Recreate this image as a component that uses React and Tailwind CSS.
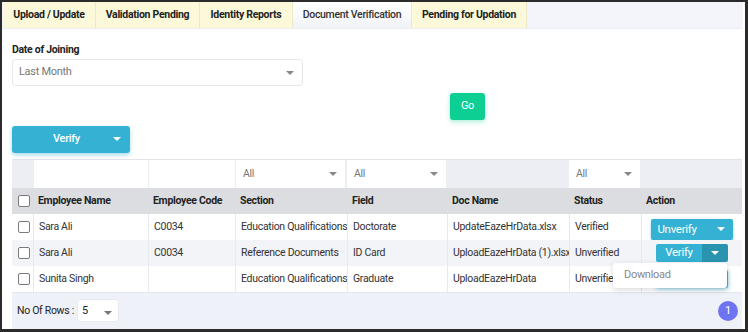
import React from 'react';

// tabs across the top
const tabs = [
    { label: 'Upload / Update', w: 'w-[93px]' },
    { label: 'Validation Pending', w: 'w-[104px]' },
    { label: 'Identity Reports', w: 'w-[93px]' },
    { label: 'Document Verification', w: 'w-[119px]', active: true },
    { label: 'Pending for Updation', w: 'w-[115px]' },
];

const rows = [
    { name: 'Sara Ali', code: 'C0034', section: 'Education Qualifications', field: 'Doctorate', doc: 'UpdateEazeHrData.xlsx', status: 'Verified', action: 'unverify' },
    { name: 'Sara Ali', code: 'C0034', section: 'Reference Documents', field: 'ID Card', doc: 'UploadEazeHrData (1).xlsx', status: 'Unverified', action: 'verify', alt: true },
    { name: 'Sunita Singh', code: '', section: 'Education Qualifications', field: 'Graduate', doc: 'UploadEazeHrData', status: 'Unverified', action: 'hidden' },
];

function Caret({ className = '' }) {
    return (
        <svg width="8" height="4" viewBox="0 0 8 4" className={className}>
            <path d="M0 0 L8 0 L4 4 Z" fill="currentColor" />
        </svg>
    );
}

function Check() {
    return <span className="block w-[12px] h-[12px] rounded-[2px] border border-[#7a7a7a] bg-white" />;
}

function FilterSelect() {
    return (
        <div className="h-full bg-white flex items-center justify-between pl-[7px] pr-[8px] text-[#777]">
            <span>All</span>
            <Caret className="text-[#888]" />
        </div>
    );
}

function App() {
    return (
        <div className="w-[748px] h-[332px] bg-white border-l-2 border-t-2 border-r-[3px] border-b-[3px] border-[#2b2b2b] overflow-hidden text-[#333] tracking-[-0.3px]"
             style={{ fontFamily: 'Roboto, "Liberation Sans", sans-serif' }}>
            <div className="mr-[2px] h-full flex flex-col">
                {/* tab bar */}
                <div className="flex h-[27px] bg-[#f4f5fa] border-b border-[#eceef2]">
                    {tabs.map((t) => (
                        <div key={t.label}
                             className={`${t.w} flex items-center justify-center text-[10.5px] border-r ${t.active ? 'bg-gradient-to-b from-white to-[#f1f3f7] border-[#e4e6ea] font-medium text-[#333]' : 'bg-[#fbf9da] border-[#ece9c6] font-bold text-[#222]'} ${t.label === 'Upload / Update' ? 'ml-[1px]' : ''}`}>
                            {t.label}
                        </div>
                    ))}
                </div>

                <div className="flex-1 flex flex-col pl-[10px] pr-[1px]">
                    <div className="mt-[14px] text-[10.5px] font-bold text-[#222] leading-[14px]">Date of Joining</div>
                    <div className="mt-[2px] w-[291px] h-[27px] border border-[#e6e8ec] rounded-[3px] flex items-center justify-between pl-[6px] pr-[8px] text-[11px] text-[#777]">
                        <span>Last Month</span>
                        <Caret className="text-[#888]" />
                    </div>

                    <div className="mt-[6px] pl-[438px]">
                        <button className="w-[35px] h-[27px] rounded-[3px] bg-[#0ecf93] text-white text-[11px] shadow-[0_2px_5px_rgba(14,207,147,0.35)]">Go</button>
                    </div>

                    <button className="mt-[6px] w-[118px] h-[27px] rounded-[3px] bg-[#35b1d3] text-white text-[11px] font-medium flex items-center shadow-[0_2px_4px_rgba(53,177,211,0.45)]">
                        <span className="flex-1 text-center pl-[8px]">Verify</span>
                        <Caret className="mr-[9px] text-white" />
                    </button>

                    {/* table */}
                    <div className="mt-[6px] relative w-[730px] text-[10.5px]">
                        <div className="grid grid-cols-[21px_115px_87px_112px_100px_122px_72px_101px] border-t border-[#e2e4ea]">
                            {/* filter row */}
                            <div className="h-[28px] bg-[#eceef3]" />
                            <div className="h-[28px] bg-[#eceef3] pl-[1px]"><div className="h-full bg-white" /></div>
                            <div className="h-[28px] bg-[#eceef3] pl-[1px]"><div className="h-full bg-white" /></div>
                            <div className="h-[28px] bg-[#eceef3] pl-[1px] pr-[2px]"><FilterSelect /></div>
                            <div className="h-[28px] bg-[#eceef3] pr-[1px]"><FilterSelect /></div>
                            <div className="h-[28px] bg-[#eceef3]" />
                            <div className="h-[28px] bg-[#eceef3] pr-[1px]"><FilterSelect /></div>
                            <div className="h-[28px] bg-[#eceef3]" />

                            {/* header row */}
                            <div className="h-[26px] bg-[#dcdde0] flex items-center pl-[6px]"><Check /></div>
                            {['Employee Name', 'Employee Code', 'Section', 'Field', 'Doc Name', 'Status', 'Action'].map((h) => (
                                <div key={h} className="h-[26px] bg-[#dcdde0] flex items-center pl-[5px] font-bold text-[#222]">{h}</div>
                            ))}

                            {rows.map((r, i) => {
                                const bg = r.alt ? 'bg-[#f3f4f8]' : 'bg-white';
                                const cell = `h-[26px] ${bg} flex items-center pl-[5px] border-l border-[#e8e9ee] whitespace-nowrap`;
                                return (
                                    <React.Fragment key={i}>
                                        <div className={`h-[26px] ${bg} flex items-center pl-[6px]`}><Check /></div>
                                        <div className={cell}>{r.name}</div>
                                        <div className={cell}>{r.code}</div>
                                        <div className={cell}>{r.section}</div>
                                        <div className={cell}>{r.field}</div>
                                        <div className={cell}>{r.doc}</div>
                                        <div className={cell}>{r.status}</div>
                                        <div className={`h-[26px] ${bg} border-l border-[#e8e9ee] flex items-center`}>
                                            {r.action === 'unverify' && (
                                                <button className="ml-[9px] mt-[5px] w-[82px] h-[21px] rounded-[2px] bg-[#35b1d3] text-white text-[11.5px] flex items-center shadow-[0_1px_3px_rgba(53,177,211,0.5)]">
                                                    <span className="flex-1 text-center pr-[14px]">Unverify</span>
                                                    <Caret className="mr-[8px] text-white" />
                                                </button>
                                            )}
                                            {r.action === 'verify' && (
                                                <div className="ml-[14px] flex h-[18px] rounded-[2px] overflow-hidden text-white text-[11.5px]">
                                                    <span className="w-[46px] bg-[#35b1d3] flex items-center justify-center">Verify</span>
                                                    <span className="w-[26px] bg-[#2a93af] flex items-center justify-center"><Caret /></span>
                                                </div>
                                            )}
                                            {r.action === 'hidden' && (
                                                <div className="ml-[14px] w-[72px] h-[18px] rounded-[2px] bg-[#35b1d3] shadow-[0_1px_4px_rgba(53,177,211,0.6)]" />
                                            )}
                                        </div>
                                    </React.Fragment>
                                );
                            })}
                        </div>

                        {/* dropdown menu over row 3 */}
                        <div className="absolute left-[601px] top-[104px] w-[114px] h-[25px] bg-white rounded-[3px] shadow-[0_2px_6px_rgba(0,0,0,0.15)] flex items-center pl-[11px] text-[11px] text-[#888]">
                            Download
                        </div>
                    </div>

                    {/* footer */}
                    <div className="w-[730px] flex-1 bg-[#eff1f8] border-t border-[#e6e8ee] flex items-center justify-between pl-[5px] pr-[4px]">
                        <div className="flex items-center gap-[3px] text-[10.5px] text-[#222]">
                            <span>No Of Rows :</span>
                            <div className="w-[42px] h-[23px] bg-white rounded-[3px] border border-[#e8e9ee] flex items-center justify-between pl-[4px] pr-[6px] text-[11px]">
                                <span>5</span>
                                <Caret className="mt-[4px] text-[#777]" />
                            </div>
                        </div>
                        <div className="w-[20px] h-[20px] rounded-full bg-[#6e73f2] text-white text-[11px] flex items-center justify-center">1</div>
                    </div>
                </div>
            </div>
        </div>
    );
}

export default App;
